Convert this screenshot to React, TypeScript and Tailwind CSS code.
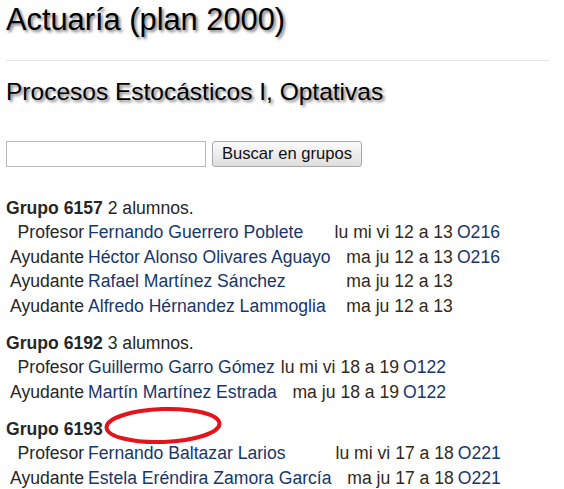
import React from "react";

type Row = { role: string; name: string; days: string; room?: string };
type Grupo = { id: string; alumnos?: string; rows: Row[] };

const grupos: Grupo[] = [
  {
    id: "6157",
    alumnos: "2 alumnos.",
    rows: [
      { role: "Profesor", name: "Fernando Guerrero Poblete", days: "lu mi vi 12 a 13", room: "O216" },
      { role: "Ayudante", name: "Héctor Alonso Olivares Aguayo", days: "ma ju 12 a 13", room: "O216" },
      { role: "Ayudante", name: "Rafael Martínez Sánchez", days: "ma ju 12 a 13" },
      { role: "Ayudante", name: "Alfredo Hérnandez Lammoglia", days: "ma ju 12 a 13" },
    ],
  },
  {
    id: "6192",
    alumnos: "3 alumnos.",
    rows: [
      { role: "Profesor", name: "Guillermo Garro Gómez", days: "lu mi vi 18 a 19", room: "O122" },
      { role: "Ayudante", name: "Martín Martínez Estrada", days: "ma ju 18 a 19", room: "O122" },
    ],
  },
  {
    id: "6193",
    rows: [
      { role: "Profesor", name: "Fernando Baltazar Larios", days: "lu mi vi 17 a 18", room: "O221" },
      { role: "Ayudante", name: "Estela Eréndira Zamora García", days: "ma ju 17 a 18", room: "O221" },
    ],
  },
];

const GrupoBlock = ({ g }: { g: Grupo }) => (
  <div className="mb-[12.5px]">
    <div>
      <b className="font-bold">Grupo {g.id}</b>
      {g.alumnos ? " " + g.alumnos : ""}
    </div>
    <table className="border-separate border-spacing-x-[4px] border-spacing-y-0">
      <tbody>
        {g.rows.map((r, i) => (
          <tr key={i}>
            <td className="p-0 text-right">{r.role}</td>
            <td className="p-0 text-left text-[#17366b]">{r.name}</td>
            <td className="p-0 text-right text-[#33291a]">{r.days}</td>
            <td className="p-0 text-left text-[#17366b]">{r.room}</td>
          </tr>
        ))}
      </tbody>
    </table>
  </div>
);

export default function App() {
  return (
    <div className="relative min-h-[489px] bg-white pl-[6px] pr-[15px] font-['Liberation_Sans',Arial,sans-serif] text-[17.6px] leading-[24.5px] text-[#262626]">
      <h1 className="m-0 pt-[2px] text-[30.8px] leading-[36px] text-black [text-shadow:2px_2px_3px_#7a7a7a]">
        Actuaría (plan 2000)
      </h1>
      <hr className="mt-[22px] border-0 border-t border-[#e2e2e2]" />
      <h2 className="mt-[15.5px] text-[24.5px] leading-[30px] text-black [text-shadow:2px_2px_3px_#7a7a7a]">
        Procesos Estocásticos I, Optativas
      </h2>
      <form className="mt-[34.5px] flex items-center gap-[6px]" onSubmit={(e) => e.preventDefault()}>
        <input
          type="text"
          className="h-[26px] w-[200px] border border-[#b9b9b9] bg-white px-1 text-[16px] outline-none"
        />
        <button
          type="submit"
          className="h-[26px] w-[150px] rounded-[3px] border border-[#a9a9a9] bg-gradient-to-b from-[#fbfbfb] to-[#dedede] text-[16.6px] leading-none text-[#111]"
        >
          Buscar en grupos
        </button>
      </form>
      <div className="mt-[28.5px]">
        {grupos.map((g) => (
          <GrupoBlock key={g.id} g={g} />
        ))}
      </div>
      <svg
        className="pointer-events-none absolute left-[100px] top-[403px]"
        width="126"
        height="45"
        viewBox="0 0 126 45"
      >
        <ellipse
          cx="63"
          cy="22.5"
          rx="56.5"
          ry="16.5"
          fill="none"
          stroke="#e3141b"
          strokeWidth="4"
          transform="rotate(-2 63 22.5)"
        />
      </svg>
    </div>
  );
}
